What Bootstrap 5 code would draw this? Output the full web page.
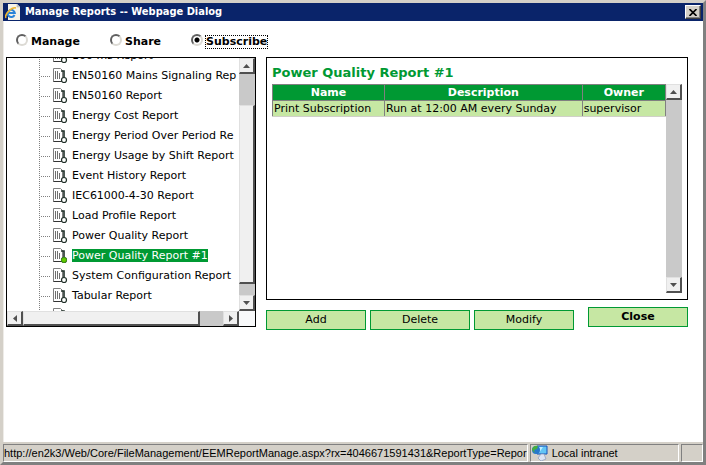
<!DOCTYPE html>
<html lang="en">
<head>
<meta charset="utf-8">
<meta name="viewport" content="width=device-width, initial-scale=1">
<title>Manage Reports -- Webpage Dialog</title>
<link href="https://cdn.jsdelivr.net/npm/bootstrap@5.3.0/dist/css/bootstrap.min.css" rel="stylesheet">
<style>
:root{--face:#d4d0c8;--green:#009933;--pale:#c6e7a3;--track:#c9c9c9;--thumb:#f0f0f0;--shade:#505050}
body{font:11px/14px Verdana,"DejaVu Sans",sans-serif;color:#000;background:var(--face)}
.dialog{min-height:100vh;background:#fff;border:solid var(--face);border-width:3px;border-right-color:#808080;border-bottom-color:#808080;box-shadow:inset 1px 0 #eeece8}
.titlebar{height:18px;background:#0a246a;color:#fff;padding:0 2px}
.titlebar h1{font:bold 11px/18px Tahoma,"DejaVu Sans Condensed","DejaVu Sans",sans-serif;margin:0}
.shut{width:16px;height:14px;padding:0;background:var(--face);border:1px solid;border-color:#fff #404040 #404040 #fff;box-shadow:inset -1px -1px #808080}
.modes{padding:13px 13px 0;height:36px;gap:29px}
.mode{margin:0;font-weight:bold;display:flex;align-items:flex-start}
.mode input{appearance:none;width:12px;height:12px;margin:0 2px 0 0;border-radius:50%;background:#fff;border:2px solid;border-color:#606060 #dcdad4 #dcdad4 #606060}
.mode input:checked{background:radial-gradient(circle,#000 0 2px,#fff 3px)}
.mode span{padding:0 1px;margin-top:1px}
.mode input:checked+span{outline:1px dotted #000;outline-offset:-1px}
.work{padding:0 15px 0 3px;gap:10px}
.treebox{flex:248 1 0;min-width:0;height:270px;border:1px solid #000;display:grid;grid-template:minmax(0,1fr) 15px / minmax(0,1fr) 16px}
.tree{overflow:hidden}
.tree ul{list-style:none;margin:-13px 0 0 32px;padding:0;background:repeating-linear-gradient(#808080 0 1px,transparent 1px 2px) left/1px 100% no-repeat}
.tree li{height:20px;display:flex;align-items:center;white-space:nowrap}
.tree li::before{content:"";flex:none;width:10px;height:1px;margin:2px 3px 0 1px;background:repeating-linear-gradient(90deg,transparent 0 1px,#808080 1px 2px)}
.tree svg{flex:none;margin:2px 4px 0 0}
.tree a{color:#000;text-decoration:none;line-height:13px}
.tree a.picked{background:var(--green);color:#fff}
.sb{display:flex;background:var(--track)}
.sb.v{flex-direction:column;width:16px}
.sb button,.knob{background:var(--thumb);border:solid;border-width:1px 2px 2px 1px;border-color:#e0e0e0 var(--shade) var(--shade) #e0e0e0;padding:0;flex:none;display:flex;align-items:center;justify-content:center}
.sb.v button{height:16px;width:16px}
.sb.h button{width:16px;height:15px}
.detail{flex:422 1 0;min-width:0}
.panel{border:1px solid #000;height:243px;padding:7px 5px 6px;display:flex;flex-direction:column}
.panel h2{font:bold 13px/15px Verdana,"DejaVu Sans",sans-serif;color:var(--green);margin:0 0 4px}
.grid{width:100%;table-layout:fixed;border-collapse:collapse}
.grid th,.grid td{border:1px solid #808080;padding:0 1px;line-height:15px;height:16px;white-space:nowrap}
.grid th{background:var(--green);color:#fff;text-align:center}
.grid td{background:var(--pale);border-bottom-color:#d0d0c8}
.actions{gap:4px;padding-top:7px}
.act{flex:100 1 0;height:20px;margin-top:3px;padding:0;background:var(--pale);border:1px solid var(--green);color:#000}
.act.final{margin:0 0 0 10px}
.status{font:11px/16px Tahoma,"Liberation Sans",sans-serif;background:var(--face);padding-top:2px;gap:2px}
.cell{height:18px;border:1px solid;border-color:#808080 #fff #fff #808080;white-space:nowrap;overflow:hidden}
</style>
<script src="https://cdn.jsdelivr.net/npm/bootstrap@5.3.0/dist/js/bootstrap.bundle.min.js"></script>
</head>
<body>
<svg width="0" height="0" class="position-absolute" aria-hidden="true">
<defs>
<symbol id="report" viewBox="0 0 15 16">
<path d="M.5.5h7l2 2v11h-9z" fill="#fff" stroke="#808080"/><path d="M.5 13.5h9" stroke="#333"/>
<path d="M2.5 3v8M4.500 3v8M6.500 5v6" stroke="#707070"/>
<path d="M8 3h3v7" fill="none" stroke="#203028" stroke-width="1.600"/>
<circle cx="11" cy="12" r="2.500" fill="#fff" stroke="#203028" stroke-width="1.200"/>
</symbol>
<symbol id="up" viewBox="0 0 7 4"><path d="M0 4L3.500 0 7 4z" fill="#505050"/></symbol>
<symbol id="down" viewBox="0 0 7 4"><path d="M0 0h7L3.500 4z" fill="#505050"/></symbol>
</defs>
</svg>
<main class="dialog d-flex flex-column">
<header class="titlebar d-flex align-items-center">
<svg width="16" height="16" viewBox="0 0 16 16" aria-hidden="true"><path d="M3 0h9l3 3v13H3z" fill="#f5f3e8"/><path d="M12 0v3h3" fill="#ccc" stroke="#aaa" stroke-width=".5"/><path d="M9.500 11A3.600 3.600 0 1 1 9.800 9H3" fill="none" stroke="#2a84d8" stroke-width="2"/><path d="M1 14C-1 10 7 3 11 4" fill="none" stroke="#eeb42c" stroke-width="1.500"/></svg>
<h1 class="ps-1 flex-grow-1">Manage Reports -- Webpage Dialog</h1>
<button class="shut d-flex align-items-center justify-content-center" type="button" aria-label="Close dialog"><svg width="8" height="7" viewBox="0 0 8 7"><path d="M.5 0l7 7M7.500 0l-7 7" stroke="#000" stroke-width="1.600"/></svg></button>
</header>
<form class="modes d-flex">
<label class="mode"><input type="radio" name="mode"><span>Manage</span></label>
<label class="mode"><input type="radio" name="mode"><span>Share</span></label>
<label class="mode"><input type="radio" name="mode" checked><span>Subscribe</span></label>
</form>
<div class="work d-flex align-items-start flex-grow-1">
<nav class="treebox" aria-label="Reports">
<div class="tree"><ul>
<li><svg width="15" height="16"><use href="#report"/></svg><a href="#">100 ms Report</a></li>
<li><svg width="15" height="16"><use href="#report"/></svg><a href="#">EN50160 Mains Signaling Rep</a></li>
<li><svg width="15" height="16"><use href="#report"/></svg><a href="#">EN50160 Report</a></li>
<li><svg width="15" height="16"><use href="#report"/></svg><a href="#">Energy Cost Report</a></li>
<li><svg width="15" height="16"><use href="#report"/></svg><a href="#">Energy Period Over Period Re</a></li>
<li><svg width="15" height="16"><use href="#report"/></svg><a href="#">Energy Usage by Shift Report</a></li>
<li><svg width="15" height="16"><use href="#report"/></svg><a href="#">Event History Report</a></li>
<li><svg width="15" height="16"><use href="#report"/></svg><a href="#">IEC61000-4-30 Report</a></li>
<li><svg width="15" height="16"><use href="#report"/></svg><a href="#">Load Profile Report</a></li>
<li><svg width="15" height="16"><use href="#report"/></svg><a href="#">Power Quality Report</a></li>
<li><svg width="15" height="16"><use href="#report"/><circle cx="11" cy="12" r="2.500" fill="#66cc00" stroke="#3c9a10"/></svg><a class="picked" href="#">Power Quality Report #1</a></li>
<li><svg width="15" height="16"><use href="#report"/></svg><a href="#">System Configuration Report</a></li>
<li><svg width="15" height="16"><use href="#report"/></svg><a href="#">Tabular Report</a></li>
<li><svg width="15" height="16"><use href="#report"/></svg></li>
</ul></div>
<div class="sb v"><button type="button" aria-label="Scroll up"><svg width="7" height="4"><use href="#up"/></svg></button><div style="flex:31"></div><div class="knob" style="flex:178"></div><div style="flex:11"></div><button type="button" aria-label="Scroll down"><svg width="7" height="4"><use href="#down"/></svg></button></div>
<div class="sb h"><button type="button" aria-label="Scroll left"><svg width="4" height="7"><path d="M4 0v7L0 3.500z" fill="#505050"/></svg></button><div class="knob" style="flex:178"></div><div style="flex:23"></div><button type="button" aria-label="Scroll right"><svg width="4" height="7"><path d="M0 0v7l4-3.500z" fill="#505050"/></svg></button></div>
<div class="bg-body-tertiary"></div>
</nav>
<section class="detail">
<div class="panel">
<h2>Power Quality Report #1</h2>
<div class="d-flex flex-grow-1">
<div class="flex-grow-1 overflow-hidden">
<table class="grid"><colgroup><col style="width:28.500%"><col style="width:50.300%"><col></colgroup>
<thead><tr><th>Name</th><th>Description</th><th>Owner</th></tr></thead>
<tbody><tr><td>Print Subscription</td><td>Run at 12:00 AM every Sunday</td><td>supervisor</td></tr></tbody></table>
</div>
<div class="sb v"><button type="button" aria-label="Scroll up"><svg width="7" height="4"><use href="#up"/></svg></button><div class="flex-grow-1"></div><button type="button" aria-label="Scroll down"><svg width="7" height="4"><use href="#down"/></svg></button></div>
</div>
</div>
<div class="actions d-flex">
<button type="button" class="act">Add</button><button type="button" class="act">Delete</button><button type="button" class="act">Modify</button><button type="button" class="act final fw-bold">Close</button>
</div>
</section>
</div>
<footer class="status d-flex">
<div class="cell flex-shrink-0 flex-grow-0">http://en2k3/Web/Core/FileManagement/EEMReportManage.aspx?rx=4046671591431&amp;ReportType=Repor</div>
<div class="cell d-flex align-items-center" style="flex:148 1 0"><svg class="me-1 flex-shrink-0" width="17" height="16" viewBox="0 0 17 16" aria-hidden="true"><path d="M6 1h10v8H6z" fill="#63c5f5" stroke="#1450b8"/><path d="M7 2h5L8 8H7z" fill="#bdeeff"/><path d="M10 9h3l2 5-5 2-3-3z" fill="#dce4f4" stroke="#8898b8" stroke-width=".7"/><circle cx="5" cy="5" r="4" fill="#2778cc"/><path d="M1 5c0-3 3-5 6-4L6 4 3 5l1 3z" fill="#47ae3f"/></svg>Local intranet</div>
<div class="cell" style="flex:20 1 0"></div>
</footer>
</main>
</body>
</html>
